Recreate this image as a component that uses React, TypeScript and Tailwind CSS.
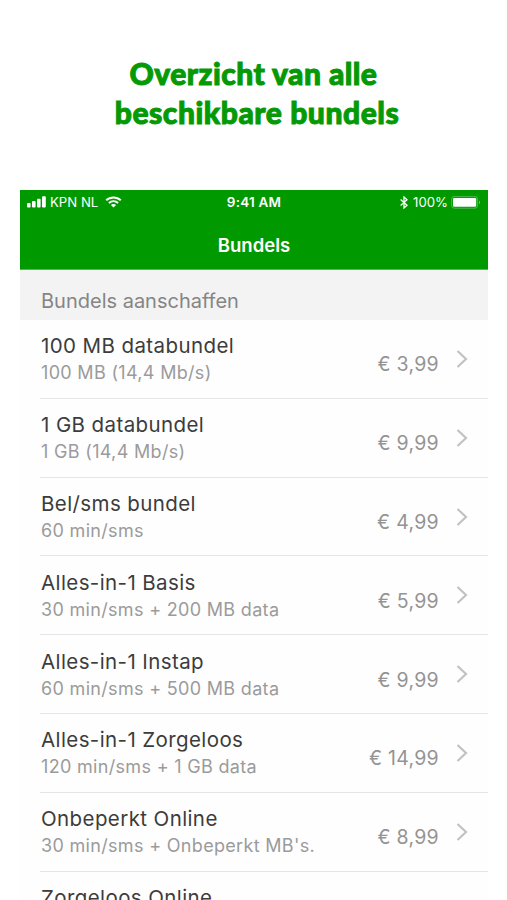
interface Bundle {
  title: string;
  details: string;
  price: string;
}

const bundles: Bundle[] = [
  { title: "100 MB databundel", details: "100 MB (14,4 Mb/s)", price: "€ 3,99" },
  { title: "1 GB databundel", details: "1 GB (14,4 Mb/s)", price: "€ 9,99" },
  { title: "Bel/sms bundel", details: "60 min/sms", price: "€ 4,99" },
  { title: "Alles-in-1 Basis", details: "30 min/sms + 200 MB data", price: "€ 5,99" },
  { title: "Alles-in-1 Instap", details: "60 min/sms + 500 MB data", price: "€ 9,99" },
  { title: "Alles-in-1 Zorgeloos", details: "120 min/sms + 1 GB data", price: "€ 14,99" },
  { title: "Onbeperkt Online", details: "30 min/sms + Onbeperkt MB's.", price: "€ 8,99" },
];

const SignalIcon = () => (
  <svg className="h-[12px] w-[19px]" viewBox="0 0 19 12" fill="currentColor">
    <rect x="0" y="7" width="3.6" height="4.5" rx="1" />
    <rect x="5" y="5" width="3.6" height="6.5" rx="1" />
    <rect x="10" y="2.8" width="3.6" height="8.7" rx="1" />
    <rect x="15" y="0.3" width="3.8" height="11.2" rx="1" />
  </svg>
);

const WifiIcon = () => (
  <svg
    className="h-[12px] w-[17px]"
    viewBox="0 0 17 12"
    fill="none"
    stroke="currentColor"
    strokeWidth="2"
  >
    <path d="M1.2 4.2C5.2 0.5 11.8 0.5 15.8 4.2" />
    <path d="M3.9 7C6.6 4.6 10.4 4.6 13.1 7" />
    <path d="M8.5 11.6L5.9 9C7.4 7.7 9.6 7.7 11.1 9Z" fill="currentColor" stroke="none" />
  </svg>
);

const BluetoothIcon = () => (
  <svg
    className="h-[13px] w-[8px]"
    viewBox="0 0 8 13"
    fill="none"
    stroke="currentColor"
    strokeWidth="1.3"
  >
    <path d="M0.6 3.6L7 9.3L4 12V1L7 3.7L0.6 9.4" />
  </svg>
);

const BatteryIcon = () => (
  <svg className="h-[13px] w-[30px]" viewBox="0 0 30 13">
    <rect
      x="0.6"
      y="0.6"
      width="26"
      height="11.6"
      rx="2.6"
      fill="none"
      stroke="white"
      strokeOpacity="0.3"
    />
    <rect x="2" y="2" width="23.2" height="8.8" rx="1.2" fill="white" />
    <path d="M28 4.5C29.3 5 29.3 7.8 28 8.3Z" fill="white" fillOpacity="0.45" />
  </svg>
);

const Chevron = () => (
  <svg
    className="h-[18px] w-[12px] text-[#c2c2c4]"
    viewBox="0 0 12 18"
    fill="none"
    stroke="currentColor"
    strokeWidth="2.2"
  >
    <path d="M1.5 1L10 9L1.5 17" />
  </svg>
);

const BundleRow = ({ title, details, price }: Bundle) => (
  <li className="ml-5 flex h-[78.8px] border-b border-[#e5e5e5] pl-px">
    <div className="flex-1 pt-[12.4px] whitespace-nowrap">
      <p className="text-[20.5px] leading-7 tracking-[0.4px] text-[#3c3c3c]">{title}</p>
      <p className="text-[18px] leading-[26px] tracking-[0.32px] text-[#9b9b9b]">{details}</p>
    </div>
    <span className="pt-[30.4px] text-[19.5px] leading-7 tracking-[0.3px] text-[#949494]">
      {price}
    </span>
    <div className="mr-[20px] ml-[17px] pt-[30px]">
      <Chevron />
    </div>
  </li>
);

export default function App() {
  return (
    <div className="flex h-[900px] w-[507px] flex-col overflow-hidden bg-white font-['Inter',sans-serif]">
      <h1 className="h-[190px] shrink-0 pt-[54px] text-center font-['Lato',sans-serif] text-[30px] leading-[39px] font-black tracking-[0.45px] text-[#059a05] [-webkit-text-stroke:1px_#059a05]">
        <span className="block">Overzicht van alle</span>
        <span className="block pl-[7px] tracking-[0.55px]">beschikbare bundels</span>
      </h1>

      <main className="ml-5 w-[468px] bg-[#fefefe]">
        <header className="h-[80px] border-b border-[#4fbb4f] bg-[#009900] text-white">
          <div className="grid h-[25px] grid-cols-[1fr_auto_1fr] items-center text-[13.2px]">
            <div className="flex items-center pl-[7px]">
              <SignalIcon />
              <span className="ml-[4px]">KPN NL</span>
              <span className="ml-[7px]">
                <WifiIcon />
              </span>
            </div>
            <span className="text-[13.5px] font-semibold tracking-[0.2px]">9:41 AM</span>
            <div className="flex items-center justify-end pr-[7px]">
              <BluetoothIcon />
              <span className="mr-[3px] ml-[5px]">100%</span>
              <BatteryIcon />
            </div>
          </div>
          <h2 className="pt-[16px] text-center text-[18.5px] leading-7 font-semibold">Bundels</h2>
        </header>

        <h3 className="h-[50px] bg-[#f3f3f3] pt-[17.4px] pl-[21px] text-[20px] leading-7 text-[#858585]">
          Bundels aanschaffen
        </h3>
        <ul>
          {bundles.map((bundle) => (
            <BundleRow key={bundle.title} {...bundle} />
          ))}
          <li className="ml-5 pt-[12px] pl-px text-[20.5px] leading-7 tracking-[0.4px] text-[#3c3c3c]">
            Zorgeloos Online
          </li>
        </ul>
      </main>
    </div>
  );
}
